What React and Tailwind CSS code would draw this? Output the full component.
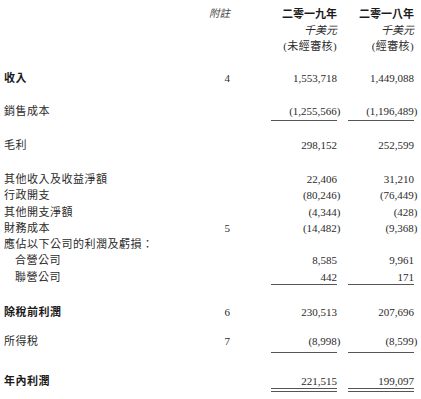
import React from "react";

const FONT = { fontFamily: '"Liberation Serif", "Noto Sans CJK TC", serif' };

function Num({ v }) {
  if (!v) return null;
  if (v.startsWith("(")) {
    return (
      <>
        {v.slice(0, -1)}
        <span className="-mr-[3.5px]">)</span>
      </>
    );
  }
  return <>{v}</>;
}

function Row({ label, note, a, b, bold, indent, rowClass = "", cellClass = "", lh = "leading-[16px]" }) {
  return (
    <div className={`flex ${lh} ${rowClass}`}>
      <div
        className={`w-[200px] pl-[4px] text-[11px] tracking-[0.5px] ${bold ? "font-bold text-[#1a1a1a]" : ""} ${indent ? "pl-[15px]" : ""}`}
      >
        {label}
      </div>
      <div className="w-[30px] text-right text-[11px]">{note}</div>
      <div className="w-[41px]" />
      <div className={`w-[66px] text-right text-[11px] ${cellClass}`}>
        <Num v={a} />
      </div>
      <div className="w-[11px]" />
      <div className={`w-[66px] text-right text-[11px] ${cellClass}`}>
        <Num v={b} />
      </div>
    </div>
  );
}

export default function App() {
  return (
    <div className="w-[421px] h-[399px] bg-white text-[#2b2b2b] overflow-hidden" style={FONT}>
      {/* header */}
      <div className="pt-[6px] flex leading-[16px] text-[11px]">
        <div className="w-[200px]" />
        <div className="w-[30px] text-right italic text-[10.5px] text-[#444]">附註</div>
        <div className="w-[41px]" />
        <div className="w-[66px] flex flex-col items-end">
          <span className="font-bold text-[#1a1a1a]">二零一九年</span>
          <span className="italic">千美元</span>
          <span className="tracking-[0.4px]">(未經審核)</span>
        </div>
        <div className="w-[11px]" />
        <div className="w-[66px] flex flex-col items-end">
          <span className="font-bold text-[#1a1a1a]">二零一八年</span>
          <span className="italic">千美元</span>
          <span className="tracking-[0.4px]">(經審核)</span>
        </div>
      </div>

      <Row rowClass="mt-[16px]" label="收入" bold note="4" a="1,553,718" b="1,449,088" />
      <Row
        rowClass="mt-[17px]"
        label="銷售成本"
        a="(1,255,566)"
        b="(1,196,489)"
        cellClass="pb-[1px] border-b border-[#555]"
      />
      <Row rowClass="mt-[16px]" label="毛利" a="298,152" b="252,599" />

      <div className="mt-[18px]">
        <Row lh="leading-[16.3px]" label="其他收入及收益淨額" a="22,406" b="31,210" />
        <Row lh="leading-[16.3px]" label="行政開支" a="(80,246)" b="(76,449)" />
        <Row lh="leading-[16.3px]" label="其他開支淨額" a="(4,344)" b="(428)" />
        <Row lh="leading-[16.3px]" label="財務成本" note="5" a="(14,482)" b="(9,368)" />
        <Row lh="leading-[16.3px]" label="應佔以下公司的利潤及虧損：" />
        <Row lh="leading-[16.3px]" label="合營公司" indent a="8,585" b="9,961" />
        <Row
          lh="leading-[16.3px]"
          label="聯營公司"
          indent
          a="442"
          b="171"
          cellClass="leading-[14px] pt-[1px] border-b border-[#555]"
        />
      </div>

      <Row rowClass="mt-[19px]" label="除稅前利潤" bold note="6" a="230,513" b="207,696" />
      <Row
        rowClass="mt-[13px]"
        label="所得稅"
        note="7"
        a="(8,998)"
        b="(8,599)"
        cellClass="pb-[3px] border-b border-[#555]"
      />
      <Row
        rowClass="mt-[21px]"
        lh="leading-[14px]"
        label="年內利潤"
        bold
        a="221,515"
        b="199,097"
        cellClass="border-b-[4px] border-double border-[#555]"
      />
    </div>
  );
}
